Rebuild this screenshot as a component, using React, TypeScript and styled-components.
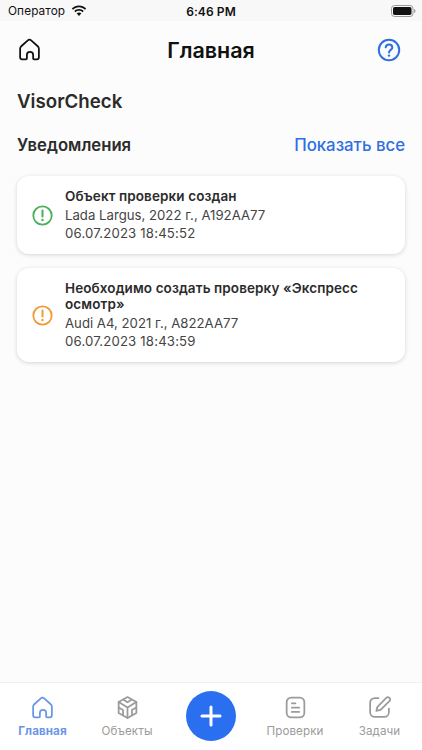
import React from "react";
import styled, { createGlobalStyle } from "styled-components";

const GlobalStyle = createGlobalStyle`
  html, body {
    margin: 0;
    padding: 0;
    background: #fcfcfc;
  }
  #root {
    height: 750px;
  }
`;

const Screen = styled.div`
  width: 422px;
  height: 750px;
  display: flex;
  flex-direction: column;
  overflow: hidden;
  background: #fcfcfc;
  font-family: Inter, "Noto Sans", sans-serif;
  color: #222;
`;

const StatusBar = styled.div`
  height: 21px;
  flex: none;
  box-sizing: border-box;
  display: grid;
  grid-template-columns: 1fr auto 1fr;
  align-items: center;
  padding: 1px 6px 0;
  background: #f8f8f8;
  color: #111;
`;

const Carrier = styled.div`
  display: flex;
  align-items: center;
  gap: 6px;
  padding-left: 2px;
  font-size: 11.8px;
  letter-spacing: 0.1px;
`;

const Clock = styled.div`
  font-size: 12px;
  font-weight: 600;
  letter-spacing: 0.1px;
`;

const Battery = styled.div`
  justify-self: end;
  display: flex;
  align-items: center;
`;

const NavBar = styled.div`
  height: 57px;
  flex: none;
  display: flex;
  align-items: center;
  justify-content: space-between;
  padding: 0 21px 0 17px;
  position: relative;
`;

const NavTitle = styled.div`
  position: absolute;
  left: 0;
  right: 0;
  text-align: center;
  font-size: 21.5px;
  font-weight: 600;
  color: #111;
  pointer-events: none;
`;

const Content = styled.main`
  flex: 1;
  padding: 12px 17px 0;
`;

const AppName = styled.h1`
  margin: 0;
  font-size: 18.7px;
  line-height: 24px;
  font-weight: 600;
  color: #2b2b2b;
`;

const SectionHeader = styled.div`
  margin-top: 19px;
  display: flex;
  align-items: center;
  justify-content: space-between;
  line-height: 24px;
`;

const SectionTitle = styled.h2`
  margin: 0;
  font-size: 16.7px;
  font-weight: 600;
  color: #2b2b2b;
`;

const ShowAll = styled.a`
  font-size: 16.8px;
  font-weight: 500;
  color: #2f6fe0;
`;

const CardList = styled.div`
  margin-top: 19px;
  display: flex;
  flex-direction: column;
  gap: 14px;
`;

const Card = styled.div`
  display: flex;
  align-items: center;
  gap: 12px;
  padding: 12px 14px 11px 15px;
  background: #fff;
  border-radius: 12px;
  box-shadow: 0 1px 4px rgba(0, 0, 0, 0.16);
`;

const CardBody = styled.div`
  flex: 1;
  min-width: 0;
`;

const CardTitle = styled.div`
  font-size: 13.5px;
  line-height: 16.5px;
  font-weight: 600;
  color: #2b2b2b;
  letter-spacing: 0.1px;
`;

const CardMeta = styled.div`
  margin-top: 1px;
  font-size: 13.2px;
  line-height: 18.5px;
  color: #444;
`;

const CardDate = styled.div`
  font-size: 13.2px;
  line-height: 18.5px;
  color: #444;
  letter-spacing: 0.17px;
`;

const TabBar = styled.nav`
  height: 67px;
  flex: none;
  display: grid;
  grid-template-columns: 85px 84px 84px 84px 85px;
  align-items: start;
  background: #fff;
  border-top: 1px solid #f0f0f0;
`;

const Tab = styled.div<{ $active?: boolean }>`
  display: flex;
  flex-direction: column;
  align-items: center;
  padding-top: 12px;
  gap: 4px;
  font-size: 11.6px;
  line-height: 15px;
  font-weight: ${(p) => (p.$active ? 700 : 400)};
  color: ${(p) => (p.$active ? "#6b96e8" : "#9b9b9b")};
  letter-spacing: 0.1px;
`;

const AddButton = styled.button`
  justify-self: center;
  width: 50px;
  height: 50px;
  margin-top: 8px;
  padding: 0;
  border: none;
  border-radius: 50%;
  background: #2a6ff0;
  display: flex;
  align-items: center;
  justify-content: center;
`;

const HomeIcon = ({ color, size }: { color: string; size: number }) => (
  <svg width={size} height={size} viewBox="0 0 24 24" fill="none" stroke={color} strokeWidth="1.7" strokeLinejoin="round">
    <path d="M3 11.200c0-.9.4-1.700 1.100-2.300l6.300-5.700c.9-.8 2.300-.8 3.200 0l6.300 5.700c.7.6 1.100 1.400 1.100 2.300v8.300c0 1.200-.9 2-2 2h-2.600c-.5 0-.9-.4-.9-.9v-3.300c0-1.700-1.300-3-3-3s-3 1.300-3 3v3.300c0 .5-.4.9-.9.9H5c-1.100 0-2-.8-2-2z" />
  </svg>
);

const AlertIcon = ({ color }: { color: string }) => (
  <svg width="21" height="21" viewBox="0 0 21 21" fill="none">
    <circle cx="10.500" cy="10.500" r="9.200" stroke={color} strokeWidth="1.800" />
    <path d="M10.500 5.500v6" stroke={color} strokeWidth="2" strokeLinecap="round" />
    <circle cx="10.500" cy="15" r="1.200" fill={color} />
  </svg>
);

const App: React.FC = () => {
  return (
    <Screen>
      <GlobalStyle />
      <StatusBar>
        <Carrier>
          Оператор
          <svg width="16" height="12" viewBox="0 0 16 12" fill="#111">
            <path d="M8 2.300c2.300 0 4.400.9 6 2.400l1.200-1.300C13.300 1.600 10.800.5 8 .5S2.700 1.600.8 3.400L2 4.700c1.600-1.500 3.700-2.400 6-2.400z" />
            <path d="M8 5.800c1.300 0 2.500.5 3.500 1.400l1.200-1.300C11.400 4.700 9.800 4 8 4s-3.400.7-4.700 1.900l1.200 1.300c1-.9 2.200-1.400 3.500-1.400z" />
            <path d="M8 7.600c-.9 0-1.700.3-2.300.9L8 11l2.300-2.500c-.6-.6-1.400-.9-2.300-.9z" />
          </svg>
        </Carrier>
        <Clock>6:46 PM</Clock>
        <Battery>
          <svg width="25" height="12" viewBox="0 0 25 12" fill="none">
            <rect x="0.500" y="0.500" width="21.500" height="11" rx="3" stroke="#999" />
            <rect x="2" y="2" width="18.500" height="8" rx="1.700" fill="#111" />
            <path d="M23.200 4v4c.8-.3 1.300-1.100 1.300-2s-.5-1.700-1.300-2z" fill="#999" />
          </svg>
        </Battery>
      </StatusBar>

      <NavBar>
        <HomeIcon color="#111" size={25} />
        <NavTitle>Главная</NavTitle>
        <svg width="24" height="24" viewBox="0 0 24 24" fill="none">
          <circle cx="12" cy="12" r="10.200" stroke="#2f6fe0" strokeWidth="2" />
          <path d="M8.700 9.300c.2-1.700 1.600-2.800 3.300-2.800 1.900 0 3.300 1.200 3.300 2.900 0 2.400-3.300 2.500-3.300 5" stroke="#2f6fe0" strokeWidth="2" strokeLinecap="round" />
          <circle cx="12" cy="17.600" r="1.200" fill="#2f6fe0" />
        </svg>
      </NavBar>

      <Content>
        <AppName>VisorCheck</AppName>
        <SectionHeader>
          <SectionTitle>Уведомления</SectionTitle>
          <ShowAll>Показать все</ShowAll>
        </SectionHeader>
        <CardList>
          <Card>
            <AlertIcon color="#4caf5c" />
            <CardBody>
              <CardTitle>Объект проверки создан</CardTitle>
              <CardMeta>Lada Largus, 2022 г., А192АА77</CardMeta>
              <CardDate>06.07.2023 18:45:52</CardDate>
            </CardBody>
          </Card>
          <Card>
            <AlertIcon color="#f29a38" />
            <CardBody>
              <CardTitle>Необходимо создать проверку «Экспресс осмотр»</CardTitle>
              <CardMeta>Audi A4, 2021 г., А822АА77</CardMeta>
              <CardDate>06.07.2023 18:43:59</CardDate>
            </CardBody>
          </Card>
        </CardList>
      </Content>

      <TabBar>
        <Tab $active>
          <HomeIcon color="#6b96e8" size={25} />
          Главная
        </Tab>
        <Tab>
          <svg width="25" height="25" viewBox="0 0 24 24" fill="none" stroke="#9b9b9b" strokeWidth="1.700" strokeLinejoin="round" strokeLinecap="round">
            <path d="M12 2l8.500 4.700v10.600L12 22l-8.500-4.700V6.700z" />
            <path d="M7.800 4.400L12 7l4.200-2.600M3.500 6.700L12 12l8.500-5.300M12 12v10M3.500 12l4.200 2.500v5M20.500 12l-4.200 2.500v5" />
          </svg>
          Объекты
        </Tab>
        <AddButton aria-label="Добавить">
          <svg width="22" height="22" viewBox="0 0 22 22" stroke="#fff" strokeWidth="3" strokeLinecap="round">
            <path d="M11 2v18M2 11h18" />
          </svg>
        </AddButton>
        <Tab>
          <svg width="25" height="25" viewBox="0 0 24 24" fill="none" stroke="#9b9b9b" strokeWidth="1.700" strokeLinecap="round">
            <rect x="3.500" y="2.500" width="17" height="19" rx="4.500" />
            <path d="M8.500 8h3.500M8.500 12.200h7M8.500 16.200h7" />
          </svg>
          Проверки
        </Tab>
        <Tab>
          <svg width="25" height="25" viewBox="0 0 24 24" fill="none" stroke="#9b9b9b" strokeWidth="1.700" strokeLinecap="round" strokeLinejoin="round">
            <path d="M11 3H7.500A4.500 4.500 0 0 0 3 7.500v9A4.500 4.500 0 0 0 7.500 21h9a4.500 4.500 0 0 0 4.500-4.500V13" />
            <path d="M18.500 2.800a2.100 2.100 0 0 1 3 3L13 14.300l-4 1 1-4z" />
          </svg>
          Задачи
        </Tab>
      </TabBar>
    </Screen>
  );
};

export default App;
